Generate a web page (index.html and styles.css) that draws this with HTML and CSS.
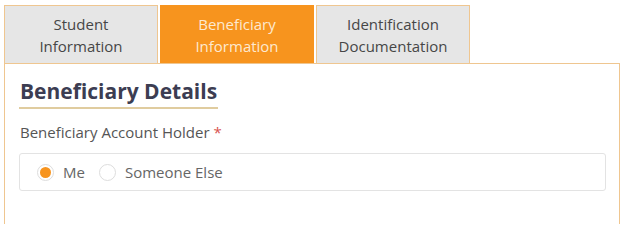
FILE: index.html
```html
<!DOCTYPE html>
<html>
<head>
<meta charset="utf-8">
<link rel="stylesheet" href="styles.css">
</head>
<body>
<div class="wrap">
  <div class="tabs">
    <div class="tab">Student<br>Information</div>
    <div class="tab active">Beneficiary<br>Information</div>
    <div class="tab">Identification<br>Documentation</div>
  </div>
  <div class="panel">
    <h2 class="heading">Beneficiary Details</h2>
    <div class="label">Beneficiary Account Holder <span class="req">*</span></div>
    <div class="radio-box">
      <label class="radio"><span class="dot checked"></span><span class="rtext">Me</span></label>
      <label class="radio"><span class="dot"></span><span class="rtext">Someone Else</span></label>
    </div>
  </div>
</div>
</body>
</html>
```
FILE: styles.css
```css
html, body { margin: 0; padding: 0; background: #fff; overflow: hidden; }
body { font-family: "Open Sans", "Liberation Sans", sans-serif; color: #555; }
.wrap { padding: 5px 4px 0 4px; }
.tabs { display: flex; gap: 2px; }
.tab {
  box-sizing: border-box;
  width: 154px;
  height: 58px;
  background: #e6e6e6;
  border: 1px solid #efc690;
  border-bottom: none;
  display: flex;
  align-items: center;
  justify-content: center;
  text-align: center;
  font-size: 15px;
  line-height: 22px;
  color: #464646;
}
.tab.active { background: #f7941e; border-color: #f7941e; color: #fde9d0; }
.panel {
  border: 1px solid #efc690;
  border-bottom: none;
  height: 160px;
  padding: 0 13px 0 14px;
}
.heading {
  display: inline-block;
  margin: 14px 0 0 0;
  padding: 0 1px 3px 1px;
  font-size: 21px;
  line-height: 26px;
  font-weight: 700;
  color: #3c3d52;
  border-bottom: 2px solid #e0cc9f;
}
.label { margin-top: 13px; font-size: 15px; line-height: 20px; color: #555; padding-left: 1px; }
.req { color: #d9534f; }
.radio-box {
  margin-top: 11px;
  height: 38px;
  box-sizing: border-box;
  border: 1px solid #e3e3e3;
  border-radius: 3px;
  display: flex;
  align-items: center;
  padding-left: 17px;
  gap: 14px;
}
.radio { display: flex; align-items: center; gap: 9px; font-size: 15px; color: #666; }
.dot {
  box-sizing: border-box;
  width: 17px; height: 17px;
  border-radius: 50%;
  border: 1px solid #ddd;
  background: #fff;
  display: flex; align-items: center; justify-content: center;
}
.dot.checked::after {
  content: "";
  width: 11px; height: 11px;
  border-radius: 50%;
  background: #f7941e;
}
```
